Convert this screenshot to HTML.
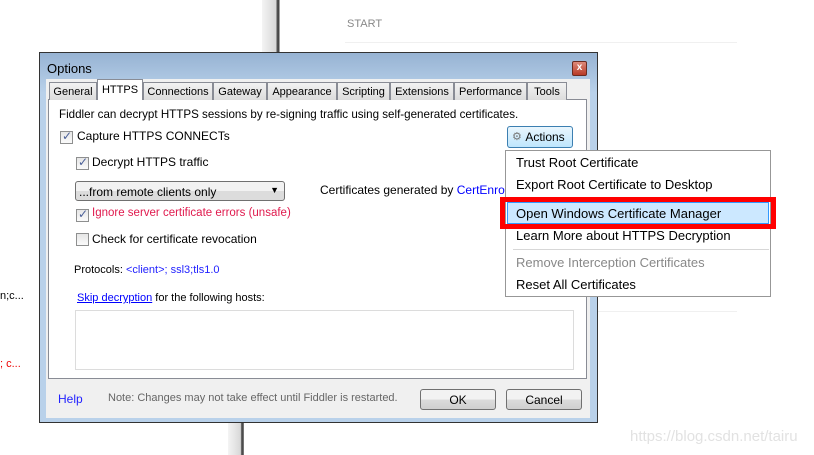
<!DOCTYPE html>
<html><head><meta charset="utf-8"><style>
*{box-sizing:border-box;margin:0;padding:0}
body{width:814px;height:455px;background:#fff;position:relative;overflow:hidden;font-family:"Liberation Sans","DejaVu Sans",sans-serif;font-size:12px;color:#000}
.a{position:absolute;white-space:nowrap}
.cb{position:absolute;width:13px;height:13px;border:1px solid #8e8f8f;background:linear-gradient(#e6e6e6,#fafafa)}
.cb.c::after{content:"✓";position:absolute;left:1px;top:-3px;font-size:12px;font-weight:bold;color:#4a5f97}
.tab{position:absolute;top:82px;height:18px;border:1px solid #898c95;border-bottom:none;background:linear-gradient(#f2f2f2,#dcdcdc);font-size:11px;padding:3px 0 0;text-align:center}
.btn{position:absolute;border:1px solid #707070;border-radius:3px;background:linear-gradient(#f2f2f2 50%,#dcdcdc 50%,#cfcfcf);text-align:center;font-size:12px}
.mi{position:absolute;left:516px;font-size:13px}
</style></head><body>
<div class="a" style="left:262px;top:0;width:20px;height:52px;background:linear-gradient(90deg,#f4f4f4,#d8d8d8 70%,#555 75%,#444 85%,#fff 90%)"></div>
<div class="a" style="left:228px;top:423px;width:18px;height:32px;background:linear-gradient(90deg,#f4f4f4,#d8d8d8 70%,#555 75%,#444 85%,#fff 90%)"></div>
<div class="a" style="left:347px;top:18px;font-size:11px;color:#888">START</div>
<div class="a" style="left:345px;top:42px;width:392px;height:1px;background:#f0f0f0"></div>
<div class="a" style="left:597px;top:311px;width:140px;height:1px;background:#f0f0f0"></div>
<div class="a" style="left:0;top:290px;font-size:11px">n;c...</div>
<div class="a" style="left:0;top:358px;font-size:11px;color:#e00">; c...</div>
<div class="a" style="left:630px;top:428px;font-size:15px;color:#e2e2e2">https://blog.csdn.net/tairu</div>

<div class="a" style="left:39px;top:52px;width:559px;height:371px;border:1px solid #333;background:linear-gradient(#97b3d3,#b9d1ea 40px,#b9d1ea)"></div>
<div class="a" style="left:47px;top:61px;font-size:13px">Options</div>
<div class="a" style="left:572px;top:61px;width:15px;height:15px;border:1px solid #6b2b20;border-radius:2px;background:linear-gradient(#dd8a7a,#b83a26);color:#fff;font-size:10px;font-weight:bold;text-align:center;line-height:12px">x</div>
<div class="a" style="left:46px;top:79px;width:544px;height:339px;background:#f0f0f0"></div>
<div class="a" style="left:48px;top:99px;width:539px;height:280px;border:1px solid #898c95;background:#fff"></div>
<div class="tab" style="left:49px;width:48px">General</div>
<div class="tab" style="left:97px;top:79px;height:21px;width:46px;background:#fff;padding-top:4px">HTTPS</div>
<div class="tab" style="left:143px;width:70px">Connections</div>
<div class="tab" style="left:213px;width:54px">Gateway</div>
<div class="tab" style="left:267px;width:70px">Appearance</div>
<div class="tab" style="left:337px;width:53px">Scripting</div>
<div class="tab" style="left:390px;width:64px">Extensions</div>
<div class="tab" style="left:454px;width:73px">Performance</div>
<div class="tab" style="left:527px;width:40px">Tools</div>

<div class="a" style="left:59px;top:108px;font-size:11.6px">Fiddler can decrypt HTTPS sessions by re-signing traffic using self-generated certificates.</div>
<div class="cb c" style="left:60px;top:131px"></div><div class="a" style="left:77px;top:129px">Capture HTTPS CONNECTs</div>
<div class="cb c" style="left:76px;top:157px"></div><div class="a" style="left:92px;top:155px">Decrypt HTTPS traffic</div>
<div class="a" style="left:75px;top:181px;width:210px;height:20px;border:1px solid #707070;border-radius:3px;background:linear-gradient(#f2f2f2 50%,#dcdcdc 50%);padding:3px 0 0 3px">...from remote clients only<span style="position:absolute;right:5px;top:3px;font-size:9px">▼</span></div>
<div class="a" style="left:320px;top:183px">Certificates generated by <span style="color:#00f">CertEnroll e</span></div>
<div class="cb c" style="left:76px;top:209px"></div><div class="a" style="left:92px;top:207px;color:#e0194d;font-size:11.5px">Ignore server certificate errors (unsafe)</div>
<div class="cb" style="left:76px;top:233px"></div><div class="a" style="left:92px;top:232px">Check for certificate revocation</div>
<div class="a" style="left:74px;top:264px;font-size:11px">Protocols: <span style="color:#22f">&lt;client&gt;; ssl3;tls1.0</span></div>
<div class="a" style="left:77px;top:292px;font-size:11px"><span style="color:#00f;text-decoration:underline">Skip decryption</span> for the following hosts:</div>
<div class="a" style="left:75px;top:310px;width:499px;height:60px;border:1px solid #dcdcdc"></div>

<div class="a" style="left:58px;top:392px;color:#22f">Help</div>
<div class="a" style="left:108px;top:392px;color:#666;font-size:11px">Note: Changes may not take effect until Fiddler is restarted.</div>
<div class="btn" style="left:420px;top:389px;width:76px;height:21px;padding-top:3px">OK</div>
<div class="btn" style="left:506px;top:389px;width:76px;height:21px;padding-top:3px">Cancel</div>

<div class="btn" style="left:507px;top:126px;width:66px;height:22px;border-color:#3c7fb1;background:linear-gradient(#eaf6fd,#bee6fd);padding:3px 0 0 10px">Actions<span style="position:absolute;left:4px;top:3px;font-size:11px;color:#777">⚙</span></div>

<div class="a" style="left:505px;top:150px;width:266px;height:147px;border:1px solid #979797;background:#fff"></div>
<div class="mi" style="top:155px">Trust Root Certificate</div>
<div class="mi" style="top:177px">Export Root Certificate to Desktop</div>
<div class="a" style="left:500px;top:197px;width:276px;height:32px;border:5px solid #f00"></div>
<div class="a" style="left:507px;top:202px;width:262px;height:22px;border:1px solid #3399ff;background:#cce8ff"></div>
<div class="mi" style="top:206px">Open Windows Certificate Manager</div>
<div class="mi" style="top:228px">Learn More about HTTPS Decryption</div>
<div class="a" style="left:513px;top:249px;width:256px;height:1px;background:#d7d7d7"></div>
<div class="mi" style="top:255px;color:#888">Remove Interception Certificates</div>
<div class="mi" style="top:277px">Reset All Certificates</div>
</body></html>
